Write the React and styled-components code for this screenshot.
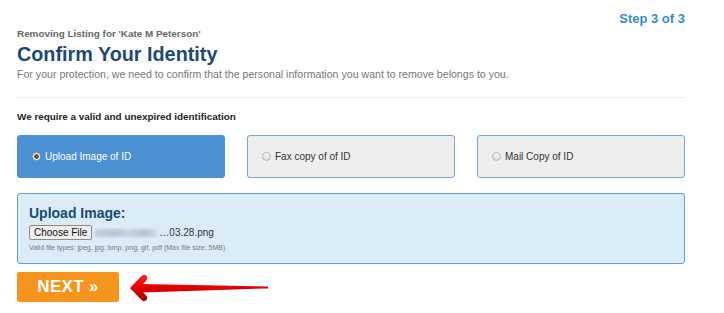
import styled, { createGlobalStyle } from "styled-components";

const GlobalStyle = createGlobalStyle`
  body {
    margin: 0;
    background: #fff;
    font-family: "Liberation Sans", Arial, sans-serif;
  }
`;

const options = [
  { id: "upload", label: "Upload Image of ID", selected: true },
  { id: "fax", label: "Fax copy of of ID" },
  { id: "mail", label: "Mail Copy of ID" },
];

const App = () => {
  return (
    <>
      <GlobalStyle />
      <Page>
        <StepLabel>Step 3 of 3</StepLabel>
        <Kicker>Removing Listing for 'Kate M Peterson'</Kicker>
        <Title>Confirm Your Identity</Title>
        <Lead>
          For your protection, we need to confirm that the personal information
          you want to remove belongs to you.
        </Lead>
        <Divider />
        <Requirement>We require a valid and unexpired identification</Requirement>
        <OptionRow>
          {options.map((o) => (
            <Option key={o.id} $selected={o.selected}>
              <Radio $selected={o.selected} />
              {o.label}
            </Option>
          ))}
        </OptionRow>
        <UploadPanel>
          <UploadTitle>Upload Image:</UploadTitle>
          <FileRow>
            <ChooseButton type="button">Choose File</ChooseButton>
            <BlurredName />
            <FileName>…03.28.png</FileName>
          </FileRow>
          <Hint>Valid file types: jpeg, jpg, bmp, png, gif, pdf (Max file size: 5MB)</Hint>
        </UploadPanel>
        <ActionRow>
          <NextButton type="button">NEXT »</NextButton>
          {/* red pointer arrow */}
          <svg width="142" height="30" viewBox="0 0 142 30">
            <defs>
              <linearGradient id="arrowRed" x1="0" y1="0" x2="0" y2="1">
                <stop offset="0" stopColor="#ff2020" />
                <stop offset="0.5" stopColor="#e00000" />
                <stop offset="1" stopColor="#a80000" />
              </linearGradient>
            </defs>
            <path
              d="M1,16 L12,4.5 Q15,1.5 17.5,4 Q19,6 17,9 L14,12 L139,14.6 L139,16.4 L14,20.5 L17,23 Q19,26 17.5,28 Q15,30.5 12,27.5 Z"
              fill="url(#arrowRed)"
            />
          </svg>
        </ActionRow>
      </Page>
    </>
  );
};

const Page = styled.div`
  width: 668px;
  margin-left: 17px;
  padding-top: 11px;
`;

const StepLabel = styled.div`
  text-align: right;
  font-size: 13px;
  font-weight: bold;
  line-height: 16px;
  color: #3b87d1;
`;

const Kicker = styled.div`
  font-size: 9.9px;
  font-weight: bold;
  line-height: 14px;
  color: #666;
`;

const Title = styled.h1`
  margin: 1px 0 0;
  font-size: 19.8px;
  line-height: 24px;
  font-weight: bold;
  color: #1a4a74;
`;

const Lead = styled.p`
  margin: 0;
  font-size: 10.6px;
  line-height: 16px;
  color: #777;
`;

const Divider = styled.hr`
  margin: 15px 0 0;
  border: 0;
  border-top: 1px solid #ececec;
`;

const Requirement = styled.div`
  margin-top: 12px;
  font-size: 9.9px;
  font-weight: bold;
  line-height: 14px;
  color: #222;
`;

const OptionRow = styled.div`
  display: grid;
  grid-template-columns: repeat(3, 1fr);
  gap: 22px;
  margin-top: 11px;
`;

const Option = styled.div`
  display: flex;
  align-items: center;
  gap: 4px;
  height: 43px;
  box-sizing: border-box;
  padding-left: 14px;
  border: 1px solid ${(p) => (p.$selected ? "#4a90d2" : "#6fa6dc")};
  border-radius: 3px;
  background: ${(p) => (p.$selected ? "#4a90d2" : "#eeeeee")};
  color: ${(p) => (p.$selected ? "#fff" : "#333")};
  font-size: 10px;
`;

const Radio = styled.span`
  width: 9px;
  height: 9px;
  border-radius: 50%;
  box-sizing: border-box;
  border: 1px solid ${(p) => (p.$selected ? "#9a9a9a" : "#b5b5b5")};
  background: ${(p) =>
    p.$selected
      ? "radial-gradient(circle, #555 0 2px, #f4f4f4 2.5px)"
      : "linear-gradient(#f6f6f6, #dcdcdc)"};
`;

const UploadPanel = styled.div`
  margin-top: 15px;
  height: 71px;
  box-sizing: border-box;
  padding: 10px 11px 0;
  border: 1px solid #5e9fdc;
  border-radius: 3px;
  background: #d9ecf7;
`;

const UploadTitle = styled.div`
  font-size: 14px;
  font-weight: bold;
  line-height: 18px;
  color: #1a4a74;
`;

const FileRow = styled.div`
  display: flex;
  align-items: center;
  margin-top: 3px;
`;

const ChooseButton = styled.button`
  height: 15px;
  padding: 0 4px;
  font-family: "Liberation Sans", Arial, sans-serif;
  font-size: 10px;
  line-height: 13px;
  color: #111;
  background: #efefef;
  border: 1px solid #8a8a8a;
  border-radius: 2px;
`;

const BlurredName = styled.span`
  width: 62px;
  height: 8px;
  margin-left: 3px;
  background: linear-gradient(
    90deg,
    #c6d3de 0%,
    #b8c7d4 30%,
    #c8d5e0 55%,
    #b5c4d1 80%,
    #cfdae4 100%
  );
  filter: blur(1px);
`;

const FileName = styled.span`
  margin-left: 2px;
  font-size: 10px;
  color: #333;
`;

const Hint = styled.div`
  margin-top: 3px;
  font-size: 7px;
  line-height: 9px;
  color: #7a7a7a;
`;

const ActionRow = styled.div`
  display: flex;
  align-items: center;
  gap: 10px;
  margin-top: 8px;
`;

const NextButton = styled.button`
  width: 102px;
  height: 30px;
  border: 0;
  border-radius: 2px;
  background: #f7941e;
  color: #fff;
  font-family: "Liberation Sans", Arial, sans-serif;
  font-size: 17px;
  font-weight: bold;
  letter-spacing: 0.3px;
`;

export default App;
